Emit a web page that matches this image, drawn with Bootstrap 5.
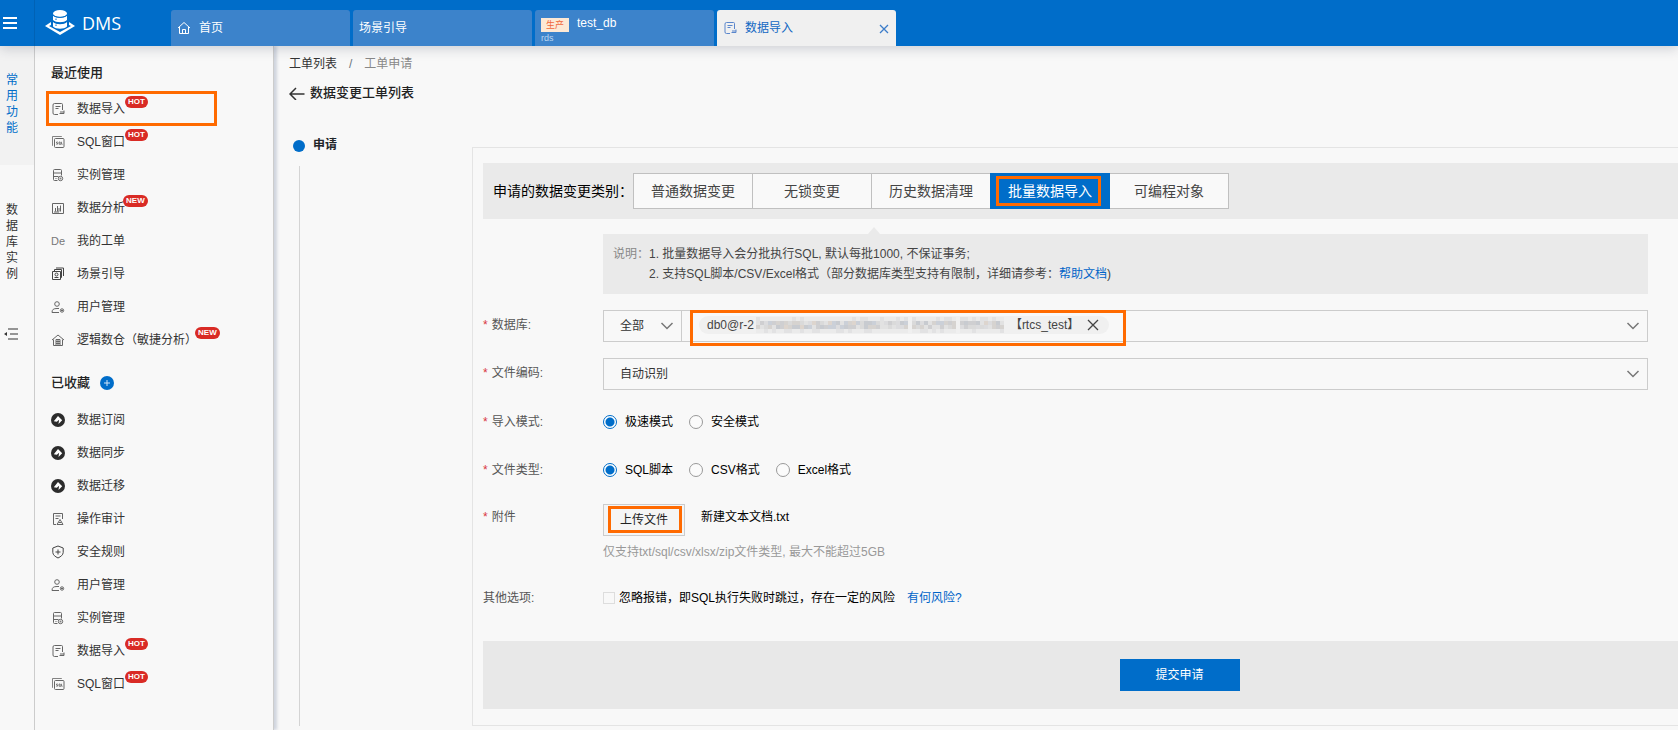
<!DOCTYPE html>
<html lang="zh-CN">
<head>
<meta charset="utf-8">
<meta name="viewport" content="width=device-width, initial-scale=1">
<title>DMS 数据导入</title>
<link href="https://cdn.jsdelivr.net/npm/bootstrap@5.3.0/dist/css/bootstrap.min.css" rel="stylesheet">
<style>
:root{--brand:#006dc9;--mark:#ff6a00}
body{font-family:"Liberation Sans","Noto Sans CJK SC",sans-serif;font-size:12px;line-height:20px;color:#333;background:#f8f8f8}
a{color:inherit;text-decoration:none}
button{font-family:inherit}
.topbar{height:46px;background:var(--brand);color:#fff;box-shadow:0 2px 12px rgba(30,40,70,.22);z-index:3}
.burger{width:35px;border-right:1px solid #0062b5!important;color:#fff}
.logo-area{width:136px;padding-left:9px;gap:6px}
.logo-name{font-family:"Open Sans","Liberation Sans",sans-serif;font-size:18px}
.worktabs{gap:3px}
.worktab{width:179px;height:36px;border-radius:3px 3px 0 0;background:#3c83cb;color:#fff;padding:0 6px}
.worktab.current{background:#f0f0f0;color:#1268c3}
.env-tag{width:28px;height:14px;line-height:14px;font-size:9px;background:#fde9d5;color:#f0683a;text-align:center}
.env-kind{font-size:9px;line-height:12px;color:#b9d5f0}
.rail{width:35px;border-right:1px solid #ccc;line-height:16px}
.rail-item{width:12px;margin-left:6px;word-break:break-all}
.rail-top{height:119px;background:#f2f2f2;color:var(--brand);padding-top:26px}
.rail-db{padding-top:37px;height:160px}
.side{width:239px;border-right:1px solid #ccc;box-shadow:3px 0 3px #cfd4de;padding:17px 0 20px 16px;z-index:1}
.side h2{font-size:13px;font-weight:500;line-height:20px;margin:0 0 9px;color:#222}
.side h2.second{margin-top:17px;margin-bottom:10px}
.side a{height:33px;gap:12px}
.side svg{width:14px;height:14px;fill:none;stroke:#666;stroke-width:1}
.de-mark{width:14px;font-size:11px;color:#777}
.tagpill{position:absolute;left:100%;top:-3px;height:12px;line-height:12px;border-radius:6px;padding:0 3px;background:#d92b25;color:#fff;font-size:8px;font-weight:700}
.tagpill.new{margin-left:-2px}
.framed{position:relative}
.framed::after{content:"";position:absolute;border:3px solid var(--mark);pointer-events:none}
.frame-side::after{left:-5px;right:56px;top:-1px;bottom:-1px}
.frame-btn::after{left:5px;right:8px;top:2px;bottom:2px}
.frame-up::after{left:4px;right:2px;top:1px;bottom:2px}
.frame-chip::after{left:-9px;right:-17px;top:-6px;bottom:-12px}
.plus{width:14px;height:14px;border:0;padding:0;margin-left:10px;background:none}
.side .plus svg{stroke:none;display:block}
main{padding:8px 0 4px 15px}
.title{font-size:13px;font-weight:500;line-height:20px;color:#222;margin-top:9px;gap:5px}
.steps{width:183px;padding-left:4px}
.step-dot{width:12px;height:12px;border-radius:50%;background:var(--brand);margin-top:2px}
.step-line{width:1px;background:#d4d4d4;margin:11px 0 0 6px}
.panel{border:1px solid #e4e4e4;border-right:0;margin-top:12px;padding:15px 0 14px 10px}
.kindbar{height:56px;background:#eaeaea;padding-left:10px;color:#000;font-size:14px}
.kindbar-label{width:140px;white-space:nowrap}
.kind{width:120px;height:36px;margin-left:-1px;border:1px solid #c0c0c0;background:#f9f9f9;color:#444;font-size:14px;padding:0}
.kind:first-child{margin-left:0}
.kind.current{background:var(--brand);border-color:var(--brand);color:#fff;position:relative;z-index:1}
.notice{position:relative;margin:15px 30px 16px 120px;background:#eaeaea;padding:10px;color:#444}
.notice::before{content:"";position:absolute;left:265px;top:-7px;border:solid transparent;border-width:0 6px 7px;border-bottom-color:#eaeaea}
.notice a,.risk{color:#0064c8}
.notice-name{color:#888}
.field-row{margin:0 30px 16px 0;min-height:32px}
.field-name{width:120px;line-height:30px;color:#555}
.field-name.req::before{content:"*";color:#d9363e;margin-right:4px}
.pick{height:32px;border:1px solid #ccc;border-radius:0;font-size:12px;line-height:20px;color:#333;padding:5px 30px 5px 16px;background-color:#f8f8f8;background-position:right 7px center;background-size:14px 14px;--bs-form-select-bg-img:url("data:image/svg+xml,%3csvg xmlns='http://www.w3.org/2000/svg' viewBox='0 0 14 14'%3e%3cpath d='M1.500 4l5.500 5.500L12.500 4' fill='none' stroke='%23777' stroke-width='1.500'/%3e%3c/svg%3e")}
.pick.scope{width:79px;padding-right:20px}
.multi{height:32px;border:1px solid #ccc;border-left:0;padding:0 7px 0 17px}
.chip{height:18px;border-radius:9px;background:#f0f0f0;color:#444;padding:0 10px 0 8px;white-space:nowrap;margin-bottom:2px}
.icon-btn{border:0;background:none;padding:0;line-height:0}
.choice{gap:8px;margin-right:16px;color:#000}
.choice input{appearance:none;width:14px;height:14px;margin:0;border:1px solid #999;border-radius:50%;background:#fbfbfb}
.choice input:checked{border-color:var(--brand);background:radial-gradient(circle,var(--brand) 0 4px,#fff 5px)}
.upload{width:82px;height:32px;margin-top:2px;border:1px solid #ccc;background:#f5f5f5;color:#222;font-size:12px;padding:0}
.tip{color:#999;margin-top:6px}
.option{color:#000;gap:4px}
.option input{appearance:none;width:12px;height:12px;margin:0;border:1px solid #ddd;background:#f8f8f8}
.option input:checked{background:var(--brand)}
.panel-foot{height:68px;background:#e8e8e8;margin-top:27px;padding-left:198px}
.submit{width:120px;height:32px;border:0;background:var(--brand);color:#fff;font-size:12px}
</style>
<script src="https://cdn.jsdelivr.net/npm/bootstrap@5.3.0/dist/js/bootstrap.bundle.min.js"></script>
</head>
<body class="d-flex flex-column min-vh-100">
<svg width="0" height="0" class="position-absolute" aria-hidden="true">
<defs>
<symbol id="i-import" viewBox="0 0 14 14"><path d="M7 12.500H3.500a1.500 1.500 0 0 1-1.500-1.500V3a1.500 1.500 0 0 1 1.500-1.500h7a1 1 0 0 1 1 1V8M4.500 4.500h5M4.500 6.500h3M13 10H9M8.500 11.500h4.500V8.500"/></symbol>
<symbol id="i-sql" viewBox="0 0 14 14"><rect x="3.500" y="3.500" width="9.500" height="9" rx="1"/><path d="M2 10.500H1.500V1.500h9V2M6.800 7H5.500v1h1v1.200H5.200M8 7h1.200v2.200H8zM9 9l.7.7M10.500 6.800v2.400h1.200" stroke-width=".8"/></symbol>
<symbol id="i-instance" viewBox="0 0 14 14"><path d="M6.500 12.500h-3a1 1 0 0 1-1-1v-9a1 1 0 0 1 1-1h6a1 1 0 0 1 1 1v5M2.500 5h8M2.500 8.500h5M4.500 10.500h1"/><circle cx="9.500" cy="10.500" r="2.200"/><circle cx="9.500" cy="10.500" r=".5"/></symbol>
<symbol id="i-chart" viewBox="0 0 14 14"><path d="M1.500 12.500v-10h11v10zM4.500 10.500V7M6.500 10.500V5M9.500 10.500V4.500M8 10.500V7M3 11h5"/></symbol>
<symbol id="i-scene" viewBox="0 0 14 14"><g stroke="#444"><path d="M3.500 4V2.500h7v8H9M1.500 4.500h8v8h-8zM5 1h7.500v8"/><circle cx="5.500" cy="7.500" r="1.500"/><path d="M3.500 10.500h4"/></g></symbol>
<symbol id="i-user" viewBox="0 0 14 14"><circle cx="6" cy="4" r="2.300"/><path d="M8 12.500H1c0-3 1.500-4 5-4h2"/><circle cx="11" cy="10.500" r="1.700"/><path d="M10 10.500h2"/></symbol>
<symbol id="i-house" viewBox="0 0 14 14"><path d="M1 7l6-5 6 5M2.500 6.500v6h9v-6M5 12.500v-6h4v6M5 8.500h4M5 10.500h4M7 7v5"/></symbol>
<symbol id="i-dts" viewBox="0 0 14 14"><circle cx="7" cy="7" r="7" fill="#2c2c2c" stroke="none"/><path d="M2.800 8.200L7 3l4.200 4.200-3.700 3.900.6-4.300-2.300 2z" fill="#fff" stroke="none"/></symbol>
<symbol id="i-audit" viewBox="0 0 14 14"><path d="M5 12.500H2.500v-11h9V7M4.500 4h5M4.500 6.500h3M6 12.500l3-5 3 5zM7.500 10.500h3"/></symbol>
<symbol id="i-shield" viewBox="0 0 14 14"><path d="M7 1l5.200 2v4.500C12 10 10 11.500 7 13 4 11.500 2 10 1.800 7.500V3zM4.500 7h5M7 4.500v5" stroke="#444"/></symbol>
</defs>
</svg>

<header class="topbar d-flex position-relative">
  <button class="burger icon-btn text-start" aria-label="菜单"><svg class="ms-0" width="20" height="14" viewBox="0 0 20 14"><path d="M3 2h14M3 7h14M3 12h14" stroke="#fff" stroke-width="2"/></svg></button>
  <a href="#" class="logo-area d-flex align-items-center">
    <svg width="32" height="28" viewBox="0 0 32 28"><g fill="#fff"><path d="M7 13v3l-2 1 11 6 11-6-2-1v-3l6 4-15 9L1 17z"/><ellipse cx="16" cy="4.500" rx="7" ry="3.500"/><path d="M9 6.500c3 3 11 3 14 0v4.500c-3 3-11 3-14 0zM9 13c3 3 11 3 14 0v4.500c-3 3-11 3-14 0z"/></g><path d="M9 6.300c3 2.700 11 2.700 14 0M9 12.200c3 2.800 11 2.800 14 0M12 9.500v1.500M12 15.500v1.500" fill="none" stroke="#006dc9"/></svg>
    <span class="logo-name">DMS</span>
  </a>
  <nav class="worktabs d-flex align-items-end">
    <a href="#" class="worktab d-flex align-items-center gap-2"><svg width="14" height="14" viewBox="0 0 13 14" fill="none" stroke="#fff"><path d="M.5 7l6-5.500 6 5.500M2 6v6.500h9V6M5 12.500v-4h3v4"/></svg>首页</a>
    <a href="#" class="worktab d-flex align-items-center">场景引导</a>
    <a href="#" class="worktab d-flex flex-column pt-1"><span class="d-flex align-items-center"><span class="env-tag mt-1">生产</span><span class="ms-2 lh-1">test_db</span></span><span class="env-kind">rds</span></a>
    <a href="#" class="worktab current d-flex align-items-center gap-2"><svg width="14" height="14" fill="none" stroke="#5a86cc"><use href="#i-import"/></svg><span>数据导入</span><svg class="ms-auto" width="12" height="12" viewBox="0 0 12 12"><path d="M2 3l8 8M10 3l-8 8" stroke="#3b7cc9" stroke-width="1.300"/></svg></a>
  </nav>
</header>

<div class="d-flex flex-grow-1">
  <nav class="rail flex-shrink-0">
    <div class="rail-top"><a href="#" class="rail-item d-block">常用功能</a></div>
    <div class="rail-db"><a href="#" class="rail-item d-block">数据库实例</a></div>
    <button class="icon-btn ms-1" aria-label="收起"><svg width="14" height="12" viewBox="0 0 14 12"><path d="M4 1h10M6 6h8M4 11h10" stroke="#333" stroke-width="1.200"/><path d="M0 6l3-2v4z" fill="#333"/></svg></button>
  </nav>

  <nav class="side flex-shrink-0 position-relative">
    <h2>最近使用</h2>
    <a href="#" class="d-flex align-items-center framed frame-side"><svg><use href="#i-import"/></svg><span class="position-relative">数据导入<span class="tagpill">HOT</span></span></a>
    <a href="#" class="d-flex align-items-center"><svg><use href="#i-sql"/></svg><span class="position-relative">SQL窗口<span class="tagpill">HOT</span></span></a>
    <a href="#" class="d-flex align-items-center"><svg><use href="#i-instance"/></svg><span>实例管理</span></a>
    <a href="#" class="d-flex align-items-center"><svg><use href="#i-chart"/></svg><span class="position-relative">数据分析<span class="tagpill new">NEW</span></span></a>
    <a href="#" class="d-flex align-items-center"><span class="de-mark">De</span><span>我的工单</span></a>
    <a href="#" class="d-flex align-items-center"><svg><use href="#i-scene"/></svg><span>场景引导</span></a>
    <a href="#" class="d-flex align-items-center"><svg><use href="#i-user"/></svg><span>用户管理</span></a>
    <a href="#" class="d-flex align-items-center"><svg><use href="#i-house"/></svg><span class="position-relative">逻辑数仓（敏捷分析）<span class="tagpill new">NEW</span></span></a>

    <h2 class="second d-flex align-items-center">已收藏<button class="plus" aria-label="添加"><svg viewBox="0 0 14 14"><circle cx="7" cy="7" r="7" fill="#006dc9"/><path d="M4 7h6M7 4v6" stroke="#cfe4f7"/></svg></button></h2>
    <a href="#" class="d-flex align-items-center"><svg><use href="#i-dts"/></svg><span>数据订阅</span></a>
    <a href="#" class="d-flex align-items-center"><svg><use href="#i-dts"/></svg><span>数据同步</span></a>
    <a href="#" class="d-flex align-items-center"><svg><use href="#i-dts"/></svg><span>数据迁移</span></a>
    <a href="#" class="d-flex align-items-center"><svg><use href="#i-audit"/></svg><span>操作审计</span></a>
    <a href="#" class="d-flex align-items-center"><svg><use href="#i-shield"/></svg><span>安全规则</span></a>
    <a href="#" class="d-flex align-items-center"><svg><use href="#i-user"/></svg><span>用户管理</span></a>
    <a href="#" class="d-flex align-items-center"><svg><use href="#i-instance"/></svg><span>实例管理</span></a>
    <a href="#" class="d-flex align-items-center"><svg><use href="#i-import"/></svg><span class="position-relative">数据导入<span class="tagpill">HOT</span></span></a>
    <a href="#" class="d-flex align-items-center"><svg><use href="#i-sql"/></svg><span class="position-relative">SQL窗口<span class="tagpill">HOT</span></span></a>
  </nav>

  <main class="flex-grow-1 d-flex flex-column">
    <nav class="d-flex" aria-label="breadcrumb"><a href="#">工单列表</a><span class="px-2 mx-1 text-secondary">/</span><span class="notice-name">工单申请</span></nav>
    <h1 class="title d-flex align-items-center mb-0"><svg width="16" height="14" viewBox="0 0 16 14"><path d="M15.500 8H1M7 2L1 8l6 6" fill="none" stroke="#333" stroke-width="1.500"/></svg>数据变更工单列表</h1>

    <div class="d-flex flex-grow-1 mt-4 pt-2">
      <div class="steps flex-shrink-0 d-flex flex-column">
        <div class="d-flex align-items-center gap-2 fw-semibold text-dark"><span class="step-dot"></span>申请</div>
        <div class="step-line flex-grow-1"></div>
      </div>

      <form class="panel flex-grow-1" onsubmit="return false">
        <div class="kindbar d-flex align-items-center">
          <span class="kindbar-label flex-shrink-0">申请的数据变更类别：</span>
          <div class="d-flex">
            <button type="button" class="kind">普通数据变更</button>
            <button type="button" class="kind">无锁变更</button>
            <button type="button" class="kind">历史数据清理</button>
            <button type="button" class="kind current framed frame-btn">批量数据导入</button>
            <button type="button" class="kind">可编程对象</button>
          </div>
        </div>

        <div class="notice d-flex">
          <span class="notice-name">说明：</span>
          <div>1. 批量数据导入会分批执行SQL, 默认每批1000, 不保证事务;<br>2. 支持SQL脚本/CSV/Excel格式（部分数据库类型支持有限制，详细请参考：<a href="#">帮助文档</a>)</div>
        </div>

        <div class="field-row d-flex">
          <label class="field-name req flex-shrink-0" for="scope">数据库:</label>
          <select id="scope" class="form-select pick scope flex-shrink-0"><option>全部</option></select>
          <div class="multi flex-grow-1 d-flex align-items-center justify-content-between">
            <div class="chip d-flex align-items-center framed frame-chip">
              <span>db0@r-2</span>
              <svg id="mosaic" width="256" height="18" viewBox="0 0 256 18" aria-hidden="true"></svg>
              <span>【rtcs_test】</span>
              <button type="button" class="icon-btn ms-2" aria-label="移除"><svg width="12" height="12" viewBox="0 0 12 12"><path d="M1 1l10 10M11 1L1 11" stroke="#444" stroke-width="1.300"/></svg></button>
            </div>
            <button type="button" class="icon-btn" aria-label="展开"><svg width="14" height="14" viewBox="0 0 14 14"><path d="M1.500 4l5.500 5.500L12.500 4" fill="none" stroke="#777" stroke-width="1.500"/></svg></button>
          </div>
        </div>

        <div class="field-row d-flex">
          <label class="field-name req flex-shrink-0" for="enc">文件编码:</label>
          <select id="enc" class="form-select pick"><option>自动识别</option></select>
        </div>

        <div class="field-row d-flex align-items-center" role="radiogroup" aria-labelledby="mode-name">
          <span class="field-name req flex-shrink-0" id="mode-name">导入模式:</span>
          <label class="choice d-flex align-items-center"><input type="radio" name="mode" checked>极速模式</label>
          <label class="choice d-flex align-items-center"><input type="radio" name="mode">安全模式</label>
        </div>

        <div class="field-row d-flex align-items-center" role="radiogroup" aria-labelledby="type-name">
          <span class="field-name req flex-shrink-0" id="type-name">文件类型:</span>
          <label class="choice d-flex align-items-center"><input type="radio" name="type" checked>SQL脚本</label>
          <label class="choice d-flex align-items-center"><input type="radio" name="type">CSV格式</label>
          <label class="choice d-flex align-items-center"><input type="radio" name="type">Excel格式</label>
        </div>

        <div class="field-row d-flex mb-3 pb-1">
          <label class="field-name req flex-shrink-0" for="upload">附件</label>
          <div>
            <div class="d-flex"><button type="button" id="upload" class="upload framed frame-up">上传文件</button><span class="ms-3 text-black" style="line-height:30px">新建文本文档.txt</span></div>
            <div class="tip">仅支持txt/sql/csv/xlsx/zip文件类型, 最大不能超过5GB</div>
          </div>
        </div>

        <div class="field-row d-flex align-items-center mb-0">
          <span class="field-name flex-shrink-0">其他选项:</span>
          <label class="option d-flex align-items-center"><input type="checkbox">忽略报错，即SQL执行失败时跳过，存在一定的风险</label>
          <a href="#" class="risk ms-2 ps-1">有何风险?</a>
        </div>

        <div class="panel-foot d-flex align-items-center justify-content-center">
          <button type="submit" class="submit">提交申请</button>
        </div>
      </form>
    </div>
  </main>
</div>
<script>
// Pixelated cover over the private part of the instance address
const tones = ['#cfcfd1','#dadada','#e2e2e2','#c8cbd0','#d6d3d0','#dcdcde','#cbd0d8','#ddd5ce'];
let cells = '', seed = 7;
for (let x = 2; x < 248; x += 4) {
  if ((x > 150 && x < 156) || (x > 200 && x < 206)) continue;
  for (const y of [1, 5, 9, 13]) {
    seed = (seed * 73 + 41) % 1009;
    const edge = y === 1 || y === 13;
    const fill = edge ? (seed % 3 ? '#ebebeb' : '#e2e2e3') : tones[seed % 8];
    cells += `<rect x="${x}" y="${y}" width="4" height="4" fill="${fill}"/>`;
  }
}
document.getElementById('mosaic').innerHTML = cells;
</script>
</body>
</html>
